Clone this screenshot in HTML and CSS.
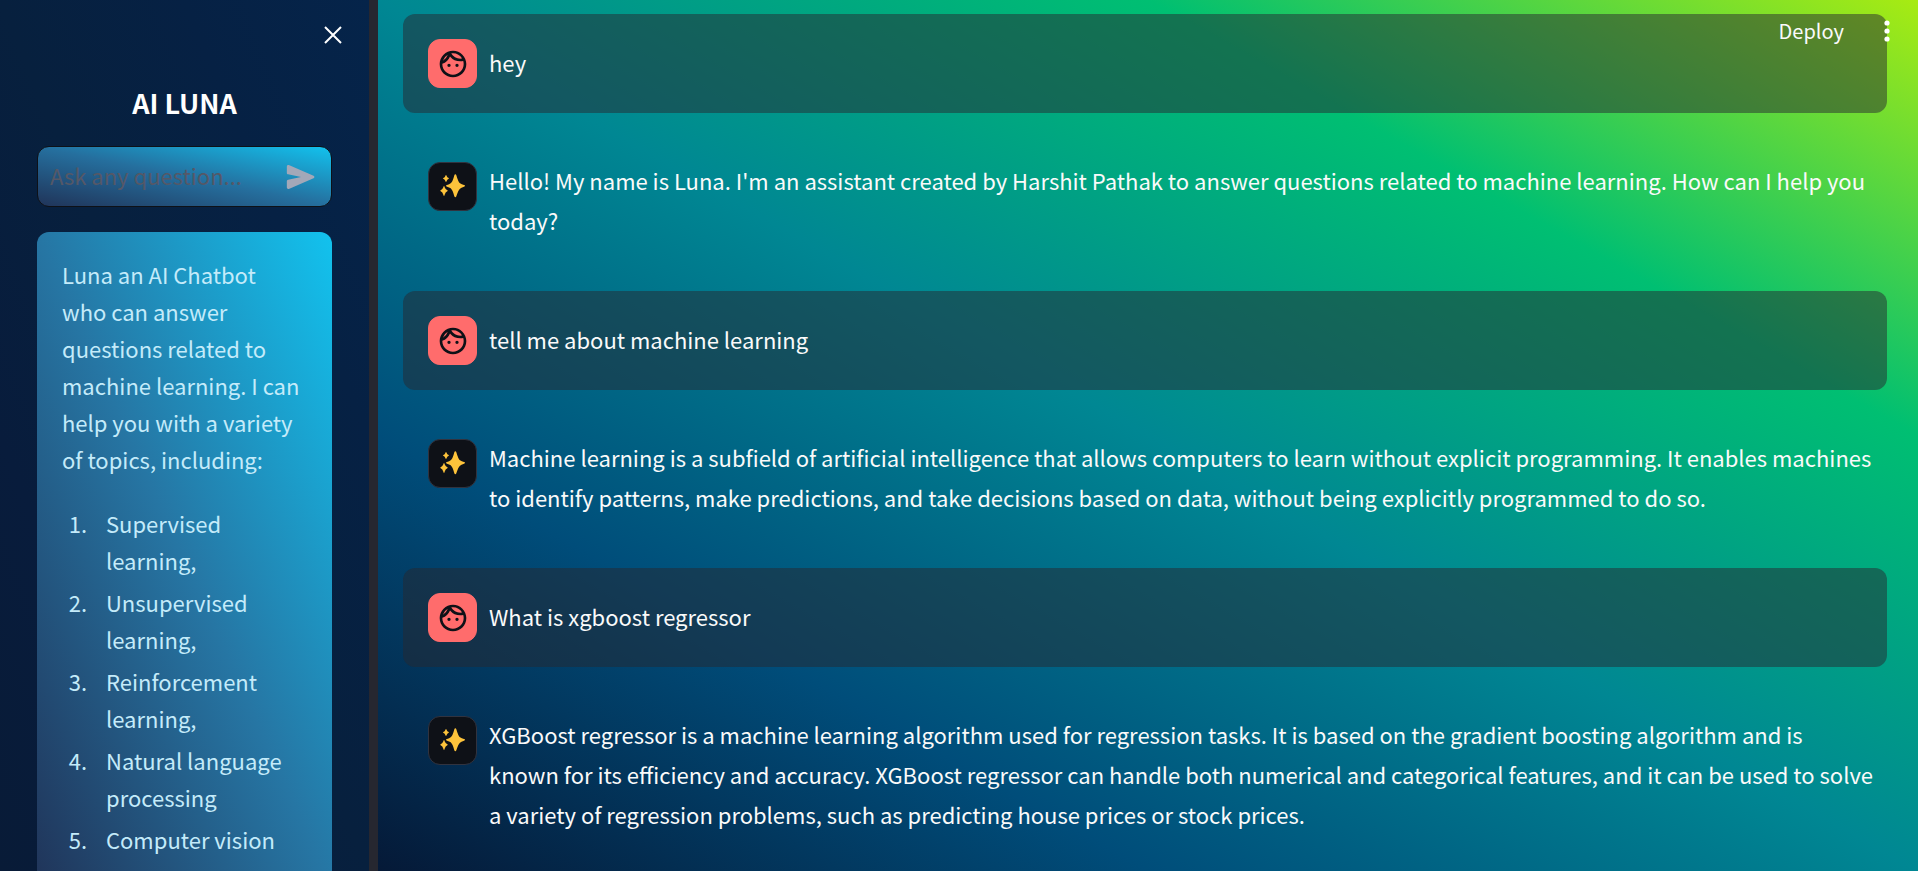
FILE: index.html
```
<!DOCTYPE html>
<html lang="en">
<head>
<meta charset="utf-8">
<title>AI LUNA</title>
<link rel="stylesheet" href="styles.css">
</head>
<body>
<svg class="defs" aria-hidden="true">
  <symbol id="face" viewBox="0 0 24 24">
    <path d="M10.25 13a1.25 1.25 0 1 1-2.5 0 1.25 1.25 0 0 1 2.5 0zM15 11.75a1.25 1.25 0 1 0 0 2.5 1.25 1.25 0 0 0 0-2.5zm7 .25c0 5.52-4.48 10-10 10S2 17.52 2 12 6.48 2 12 2s10 4.48 10 10zM10.66 4.12C12.06 6.44 14.6 8 17.5 8c.46 0 .91-.05 1.34-.12C17.44 5.56 14.9 4 12 4c-.46 0-.91.05-1.34.12zM4.42 9.47a8.046 8.046 0 0 0 3.66-4.44 8.046 8.046 0 0 0-3.66 4.44zM20 12c0-.78-.12-1.53-.33-2.24-.7.15-1.42.24-2.17.24a10 10 0 0 1-7.76-3.69A10.016 10.016 0 0 1 4 11.86c.01.04 0 .09 0 .14 0 4.41 3.59 8 8 8s8-3.59 8-8z"/>
  </symbol>
  <symbol id="sparkles" viewBox="3 3 141 141">
    <path d="M82 37Q84 37 85 40Q91 61 96 64Q101 67 108 69Q111 70 111 71Q111 72 108 74Q99 77 96 80Q91 84 85 103Q84 106 82 106Q80 106 79 103Q74 84 68 79Q64 76 57 74Q54 73 54 71Q54 70 57 69Q64 67 68 64Q74 60 79 40Q80 37 82 37Z"/>
    <path d="M54 39Q55 39 56 42Q57 46 62 48Q64 49 62 50Q57 52 56 57Q55 60 54 60Q53 60 52 57Q51 52 46 50Q43 49 46 48Q51 46 52 42Q53 39 54 39Z"/>
    <path d="M48 72Q49 72 50 76Q52 82 58 85Q61 87 58 88Q52 91 50 98Q49 102 48 102Q47 102 46 98Q44 91 38 88Q35 87 38 85Q44 82 46 76Q47 72 48 72Z"/>
  </symbol>
</svg>
<div class="app">
  <aside class="sidebar">
    <div class="sidebar-top">
      <button class="icon-button" type="button" aria-label="Close sidebar">
        <svg width="18" height="18" viewBox="0 0 18 18"><path d="M1 1L17 17M17 1L1 17" fill="none" stroke="#fff" stroke-width="2"/></svg>
      </button>
    </div>
    <h1 class="title">AI LUNA</h1>
    <form class="ask">
      <input class="ask-input" type="text" aria-label="Ask any question" placeholder="Ask any question...">
      <button class="icon-button" type="button" aria-label="Send">
        <svg width="34" height="34" viewBox="0 0 24 24" fill="#a3a8b8"><path d="M3.4 20.4l17.45-7.48c.81-.35.81-1.49 0-1.84L3.4 3.6c-.66-.29-1.39.2-1.39.91L2 9.12c0 .5.37.93.87.99L12 12 2.87 13.88c-.5.07-.87.5-.87 1l.01 4.61c0 .71.73 1.2 1.39.91z"/></svg>
      </button>
    </form>
    <section class="card">
      <p>Luna an AI Chatbot who can answer questions related to machine learning. I can help you with a variety of topics, including:</p>
      <ol>
        <li>Supervised learning,</li>
        <li>Unsupervised learning,</li>
        <li>Reinforcement learning,</li>
        <li>Natural language processing</li>
        <li>Computer vision</li>
      </ol>
    </section>
  </aside>
  <div class="resizer"></div>
  <main class="main">
    <header class="toolbar">
      <button class="deploy" type="button">Deploy</button>
      <button class="icon-button" type="button" aria-label="Main menu">
        <svg width="6" height="22" viewBox="0 0 6 22" fill="#fff"><circle cx="3" cy="3" r="2.6"/><circle cx="3" cy="11" r="2.6"/><circle cx="3" cy="19" r="2.6"/></svg>
      </button>
    </header>
    <article class="message user">
      <div class="avatar"><svg width="32" height="32"><use href="#face"/></svg></div>
      <p>hey</p>
    </article>
    <article class="message">
      <div class="avatar"><svg width="47" height="47"><use href="#sparkles"/></svg></div>
      <p>Hello! My name is Luna. I'm an assistant created by Harshit Pathak to answer questions related to machine learning. How can I help you today?</p>
    </article>
    <article class="message user">
      <div class="avatar"><svg width="32" height="32"><use href="#face"/></svg></div>
      <p>tell me about machine learning</p>
    </article>
    <article class="message">
      <div class="avatar"><svg width="47" height="47"><use href="#sparkles"/></svg></div>
      <p>Machine learning is a subfield of artificial intelligence that allows computers to learn without explicit programming. It enables machines to identify patterns, make predictions, and take decisions based on data, without being explicitly programmed to do so.</p>
    </article>
    <article class="message user">
      <div class="avatar"><svg width="32" height="32"><use href="#face"/></svg></div>
      <p>What is xgboost regressor</p>
    </article>
    <article class="message">
      <div class="avatar"><svg width="47" height="47"><use href="#sparkles"/></svg></div>
      <p>XGBoost regressor is a machine learning algorithm used for regression tasks. It is based on the gradient boosting algorithm and is<br>known for its efficiency and accuracy. XGBoost regressor can handle both numerical and categorical features, and it can be used to solve<br>a variety of regression problems, such as predicting house prices or stock prices.</p>
    </article>
  </main>
</div>
</body>
</html>
```
FILE: styles.css
```
* {
  box-sizing: border-box;
}

body {
  margin: 0;
  font-family: "Noto Sans CJK SC", "Noto Sans", sans-serif;
  font-size: 22px;
  line-height: 40px;
  color: #fafafa;
}

h1, p, ol {
  margin: 0;
}

button {
  padding: 0;
  border: 0;
  background: none;
  font: inherit;
  color: inherit;
  cursor: pointer;
}

.defs {
  display: none;
}

.app {
  display: flex;
  height: 100vh;
  overflow: hidden;
}

.icon-button {
  display: flex;
}

/* Sidebar */

.sidebar {
  flex: 0 0 369px;
  padding: 26px 37px 0;
  overflow: hidden;
  background: linear-gradient(to left bottom, #05244a, #062144, #07203e, #081c3c, #081b37);
}

.sidebar-top {
  display: flex;
  justify-content: flex-end;
  margin-right: -10px;
}

.title {
  margin: 39px 0 23px;
  font-size: 27px;
  line-height: 40px;
  font-weight: 700;
  text-align: center;
  color: #fff;
}

.ask {
  display: flex;
  align-items: center;
  justify-content: space-between;
  height: 61px;
  padding: 0 13px 0 12px;
  border: 1px solid #0e1117;
  border-radius: 12px;
  background: linear-gradient(to right top, #203459, #256f9e, #12c2ee);
}

.ask-input {
  flex: 1;
  min-width: 0;
  padding: 0 0 4px;
  border: 0;
  outline: 0;
  background: none;
  font: inherit;
  color: #fafafa;
}

.ask-input::placeholder {
  color: #555867;
  opacity: 1;
}

.card {
  margin-top: 25px;
  padding: 24px 30px 25px 25px;
  border-radius: 12px;
  line-height: 37px;
  color: #c4ebfa;
  background: linear-gradient(to right top, #203459, #2676a4, #12c2ee);
}

.card ol {
  margin-top: 27px;
  padding-left: 30px;
}

.card li {
  padding-left: 14px;
  margin-bottom: 5px;
}

.resizer {
  flex: 0 0 9px;
  background: #262730;
}

/* Chat */

.main {
  position: relative;
  flex: 1;
  display: flex;
  flex-direction: column;
  gap: 24px;
  padding: 14px 31px 0 25px;
  background: linear-gradient(to right top, #051937, #004d7a, #008793, #00bf72, #a8eb12);
}

.toolbar {
  position: absolute;
  top: 16px;
  right: 28px;
  display: flex;
  align-items: center;
  gap: 40px;
  font-size: 20px;
  line-height: 30px;
}

.message {
  display: flex;
  align-items: flex-start;
  gap: 12px;
  padding: 25px 0 25px 25px;
  border-radius: 12px;
}

.message p {
  flex: 1;
  align-self: center;
  margin: -2px 0 2px;
}

.user {
  background: rgba(38, 39, 48, 0.5);
}

.avatar {
  display: flex;
  align-items: center;
  justify-content: center;
  flex: 0 0 49px;
  height: 49px;
  border: 1px solid #31333f;
  border-radius: 12px;
  background: #0e1117;
  fill: #fdc33b;
}

.user .avatar {
  border-color: #ff6c6c;
  background: #ff6c6c;
  fill: #0e1117;
}
```
